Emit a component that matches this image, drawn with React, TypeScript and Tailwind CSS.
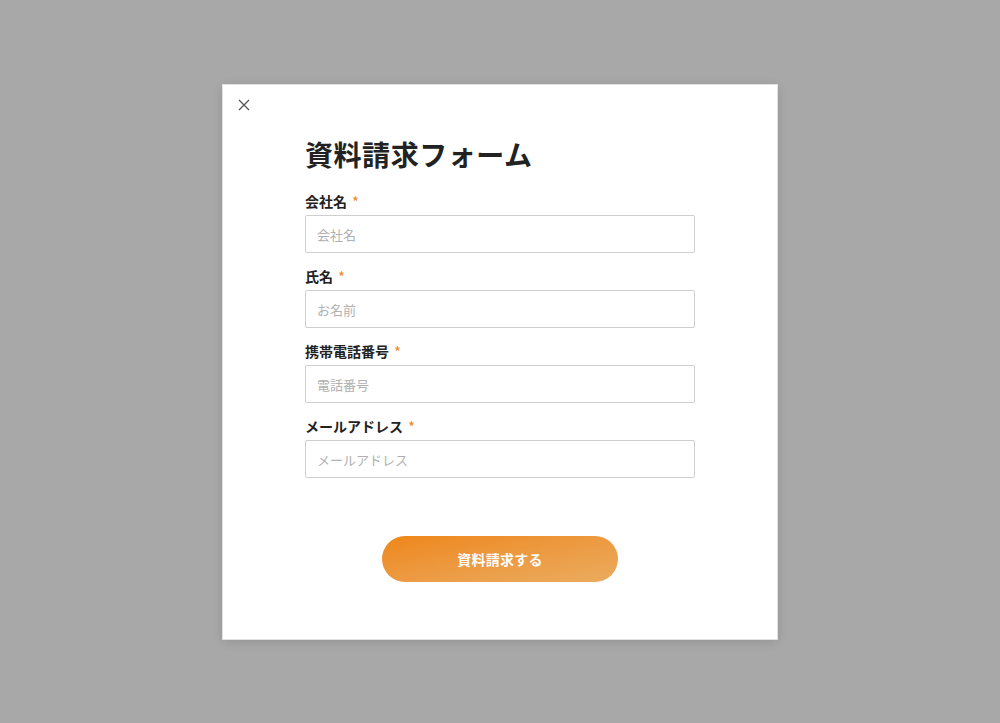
import React from 'react';

const fields = [
  { label: '会社名', placeholder: '会社名', type: 'text' },
  { label: '氏名', placeholder: 'お名前', type: 'text' },
  { label: '携帯電話番号', placeholder: '電話番号', type: 'tel' },
  { label: 'メールアドレス', placeholder: 'メールアドレス', type: 'email' },
];

export default function App() {
  return (
    <div
      className="w-full h-[723px] bg-[#a8a8a8] flex items-start justify-center pt-[84px]"
      style={{ fontFamily: '"Noto Sans CJK JP", "Noto Sans", sans-serif' }}
    >
      <div className="relative w-[556px] h-[556px] bg-white border border-[#e2e2e2] shadow-[0_2px_10px_rgba(0,0,0,0.12)] flex flex-col items-center pt-[48px]">
        {/* close */}
        <button className="absolute left-[14px] top-[13px] w-[14px] h-[14px] flex items-center justify-center text-[#555]">
          <svg width="12" height="12" viewBox="0 0 12 12" fill="none" stroke="currentColor" strokeWidth="1.3">
            <path d="M1 1L11 11M11 1L1 11" />
          </svg>
        </button>

        <div className="w-[390px] flex flex-col">
          <h1 className="text-[28px] leading-[42px] font-bold text-[#222] tracking-[0.02em]">資料請求フォーム</h1>

          <div className="flex flex-col gap-[14px] mt-[17px]">
            {fields.map((f) => (
              <div key={f.label} className="flex flex-col">
                <label className="text-[14px] leading-[19px] font-bold text-[#222] flex items-center">
                  {f.label}
                  <span className="ml-[5px] text-[#ef8a1f] text-[15px] leading-[19px] font-normal">*</span>
                </label>
                <input
                  type={f.type}
                  placeholder={f.placeholder}
                  className="mt-[4px] h-[38px] w-full border border-[#cfcfcf] rounded-[2px] px-[11px] text-[13px] text-[#333] placeholder:text-[#b0b0b0] outline-none"
                />
              </div>
            ))}
          </div>
        </div>

        <button className="mt-[58px] w-[236px] h-[46px] rounded-full bg-gradient-to-br from-[#ee8714] to-[#eaac5e] text-white text-[14px] font-bold tracking-[0.02em]">
          資料請求する
        </button>
      </div>
    </div>
  );
}
